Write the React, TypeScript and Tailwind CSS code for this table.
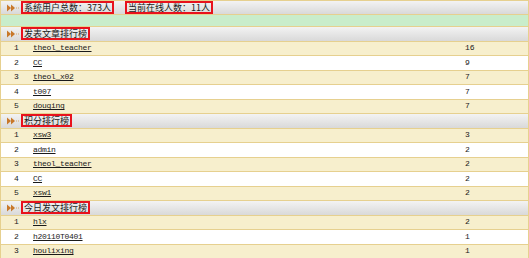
import React from 'react';

type Entry = { name: string; count: number };

type Board = { title: string; rows: Entry[] };

const boards: Board[] = [
	{
		title: '发表文章排行榜',
		rows: [
			{ name: 'theol_teacher', count: 16 },
			{ name: 'CC', count: 9 },
			{ name: 'theol_x02', count: 7 },
			{ name: 't007', count: 7 },
			{ name: 'douqing', count: 7 },
		],
	},
	{
		title: '积分排行榜',
		rows: [
			{ name: 'xsw3', count: 3 },
			{ name: 'admin', count: 2 },
			{ name: 'theol_teacher', count: 2 },
			{ name: 'CC', count: 2 },
			{ name: 'xsw1', count: 2 },
		],
	},
	{
		title: '今日发文排行榜',
		rows: [
			{ name: 'hlx', count: 2 },
			{ name: 'h20110T0401', count: 1 },
			{ name: 'houlixing', count: 1 },
		],
	},
];

const cjk = "font-['SimSun','Noto_Sans_CJK_SC',sans-serif]";
const mono = "font-['Liberation_Mono',monospace]";

const Arrow = () => (
	<svg width="14" height="8" viewBox="0 0 14 8" className="shrink-0">
		<path d="M0 0.5 L4 4 L0 7.5 Z" fill="#c8782a" />
		<path d="M4 0.5 L8 4 L4 7.5 Z" fill="#c8782a" />
		<rect x="9" y="3.5" width="1" height="1" fill="#d9a56a" />
		<rect x="11" y="3.5" width="1" height="1" fill="#d9a56a" />
	</svg>
);

const RedBox: React.FC<{ children: React.ReactNode; className?: string }> = ({
	children,
	className = '',
}) => (
	<span
		className={`flex h-full items-center border-2 border-[#e8121c] px-[1px] text-[9px] leading-none text-[#1a1a1a] ${cjk} ${className}`}
	>
		{children}
	</span>
);

const SectionHeader: React.FC<{ title: string }> = ({ title }) => (
	<div className="flex h-[14.5px] items-center border-b border-[#e6d08f] bg-gradient-to-b from-[#f3f3f3] to-[#d9d9d9] pl-[6px]">
		<Arrow />
		<RedBox className="-mt-[1px] h-[15px]">{title}</RedBox>
	</div>
);

const Row: React.FC<{ rank: number; entry: Entry; odd: boolean }> = ({ rank, entry, odd }) => (
	<div
		className={`flex h-[14.5px] items-center border-b border-[#e6d08f] text-[8px] text-[#1a1a1a] ${mono} ${
			odd ? 'bg-[#f7efcd]' : 'bg-white'
		}`}
	>
		<span className="w-[32px] pl-[13px]">{rank}</span>
		<span className="flex-1 underline underline-offset-1 tracking-[-0.3px]">{entry.name}</span>
		<span className="w-[63px]">{entry.count}</span>
	</div>
);

export default function App() {
	return (
		<div className="h-[258px] w-[529px] overflow-hidden bg-white">
			<div className="border-x border-[#e6d08f]">
				<div className="flex h-[15px] items-center border-y border-[#e6d08f] bg-gradient-to-b from-[#f3f3f3] to-[#d9d9d9] pl-[6px]">
					<Arrow />
					<RedBox className="h-[15px]">系统用户总数：373人</RedBox>
					<RedBox className="ml-[11px] h-[15px]">当前在线人数：11人</RedBox>
				</div>
				<div className="h-[12px] border-b border-[#e6d08f] bg-[#c9edcb]" />
				{boards.map((b) => (
					<div key={b.title}>
						<SectionHeader title={b.title} />
						{b.rows.map((r, i) => (
							<Row key={i} rank={i + 1} entry={r} odd={i % 2 === 0} />
						))}
					</div>
				))}
			</div>
		</div>
	);
}
